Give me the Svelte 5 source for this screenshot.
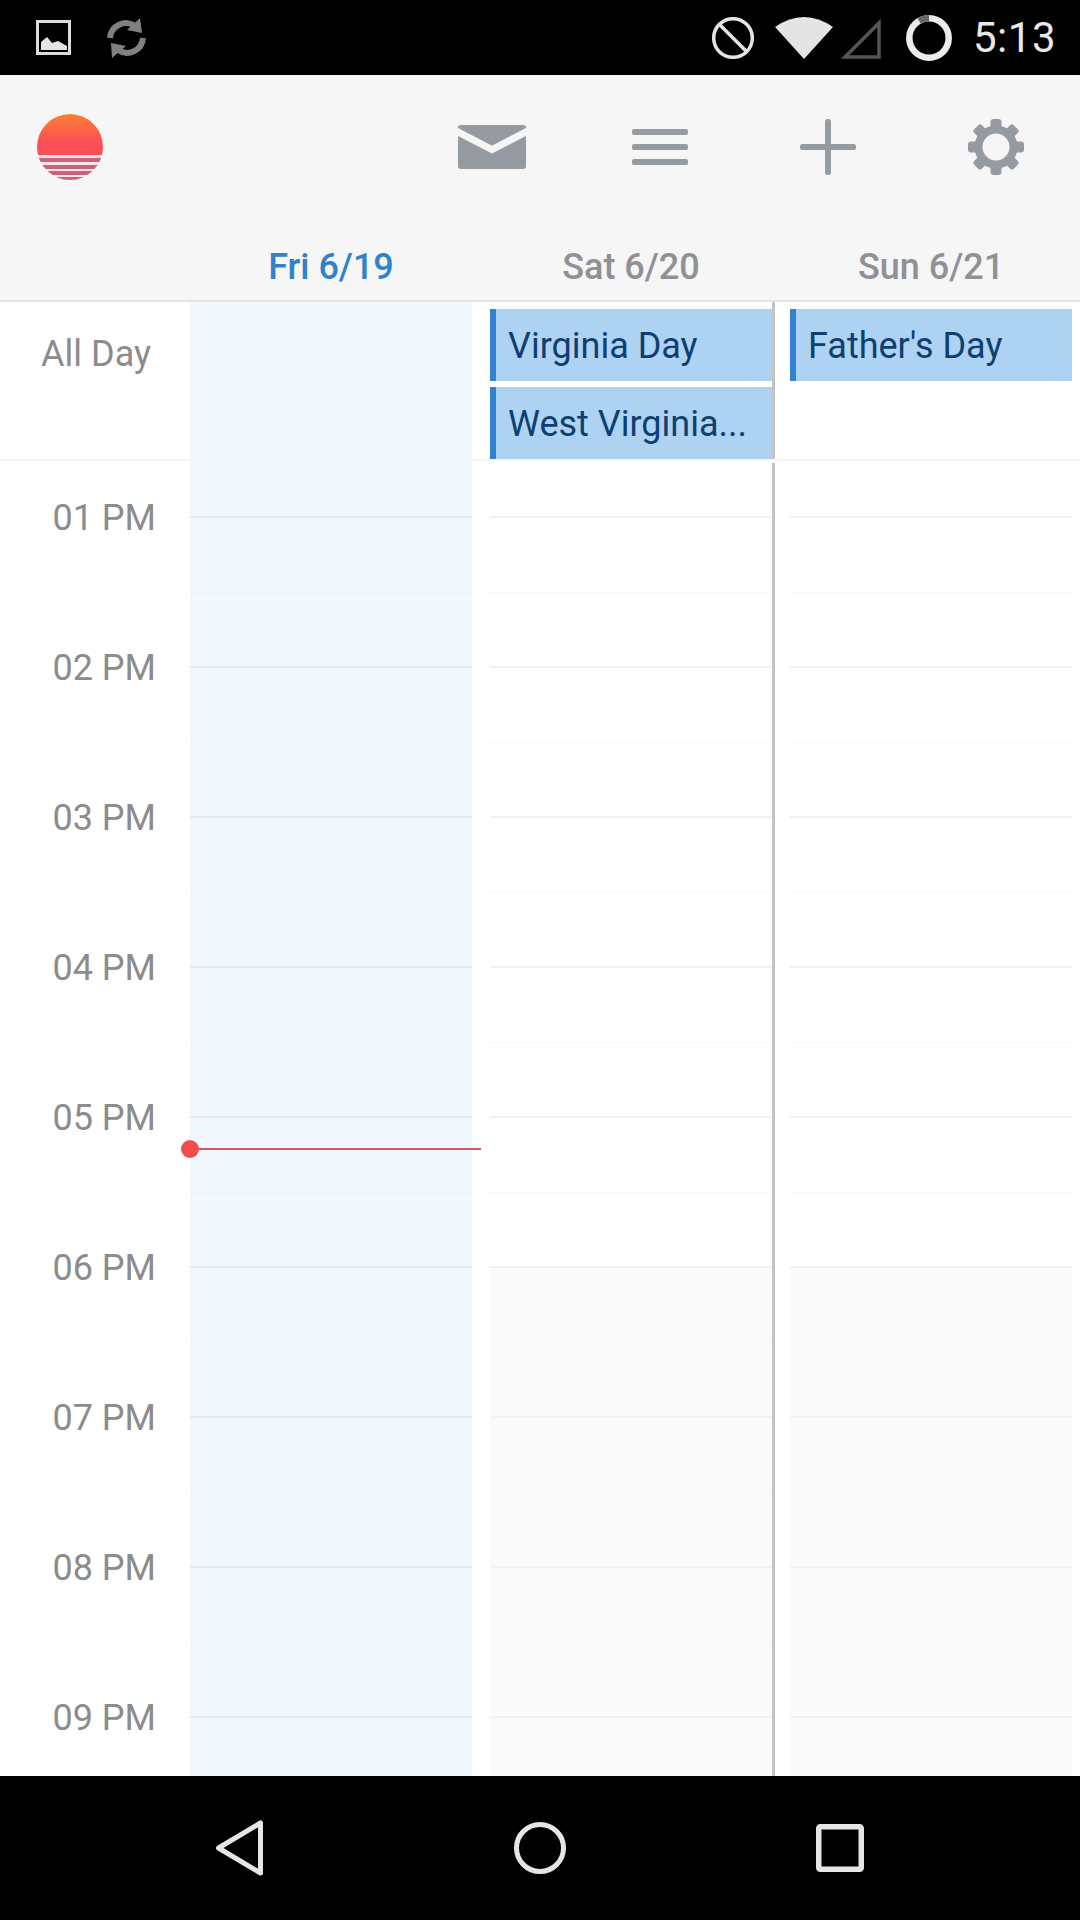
<script>
  const hours = ['01 PM', '02 PM', '03 PM', '04 PM', '05 PM', '06 PM', '07 PM', '08 PM', '09 PM'];

  // half hour rows, index 0 ends on the 01 PM line
  const slots = Array.from({ length: 18 }, (_, i) => ({
    hour: i % 2 === 0,
    off: i > 10
  }));

  const teeth = [0, 45, 90, 135, 180, 225, 270, 315];
  const stripes = [158, 165, 171, 177];
</script>

<div class="phone">
  <div class="statusbar">
    <div class="status-left">
      <svg width="35" height="35" viewBox="36 20 35 35">
        <rect x="37.5" y="21.5" width="32" height="32" fill="none" stroke="#dcdcdc" stroke-width="3" />
        <path d="M41 50V42L47 37L52 43L58 41L67 46V50Z" fill="#e4e4e4" />
      </svg>
      <svg width="40" height="42" viewBox="106 17 40 42">
        <path d="M110 38A16 16 0 0 1 135 26" fill="none" stroke="#808080" stroke-width="6" />
        <polygon points="140,18 142,33 127,30" fill="#808080" />
        <path d="M143 38A16 16 0 0 1 118 50" fill="none" stroke="#808080" stroke-width="6" />
        <polygon points="112,58 111,43 126,46" fill="#808080" />
      </svg>
    </div>
    <div class="status-right">
      <svg width="42" height="42" viewBox="712 16 42 42">
        <circle cx="733" cy="37" r="19.3" fill="none" stroke="#e4e4e4" stroke-width="3.5" />
        <path d="M720 24L746 50" stroke="#e4e4e4" stroke-width="3.5" />
      </svg>
      <svg width="58" height="42" viewBox="775 16 58 42">
        <path d="M804 58L775 26Q804 6 833 26Z" fill="#e4e4e4" />
      </svg>
      <svg width="41" height="42" viewBox="840 16 41 42">
        <path d="M879 22V56H845Z" fill="none" stroke="#555" stroke-width="3.5" />
      </svg>
      <svg class="battery" width="46" height="46" viewBox="906 14 46 46">
        <circle cx="929" cy="37" r="19.7" fill="none" stroke="#ececec" stroke-width="6.5" />
        <path d="M919.2 20A19.7 19.7 0 0 1 929 17.3" fill="none" stroke="#666" stroke-width="6.5" />
      </svg>
      <span class="clock">5:13</span>
    </div>
  </div>

  <header class="toolbar">
    <div class="actions">
      <svg class="logo" width="66" height="66" viewBox="37 114 66 66">
        <defs>
          <linearGradient id="sun" x1="0" y1="0" x2="0" y2="1">
            <stop offset="0" stop-color="#fb8033" />
            <stop offset="0.7" stop-color="#fb4f56" />
          </linearGradient>
          <clipPath id="disc"><circle cx="70" cy="147" r="33" /></clipPath>
        </defs>
        <g clip-path="url(#disc)">
          <rect x="37" y="114" width="66" height="41" fill="url(#sun)" />
          <rect x="37" y="155" width="66" height="25" fill="#fbe5e6" />
          {#each stripes as y}
            <rect x="37" {y} width="66" height="4" fill="#c8637c" />
          {/each}
        </g>
      </svg>
      <div class="buttons">
        <button aria-label="Mail">
          <svg width="68" height="44" viewBox="458 125 68 44">
            <rect x="458" y="125" width="68" height="44" rx="3" fill="#969ba2" />
            <path d="M456 131L492 149.500L528 131" fill="none" stroke="#f6f6f7" stroke-width="7" />
          </svg>
        </button>
        <button aria-label="List">
          <svg width="56" height="36" viewBox="0 0 56 36">
            <rect y="0" width="56" height="6" rx="2" fill="#969ba2" />
            <rect y="15" width="56" height="6" rx="2" fill="#969ba2" />
            <rect y="30" width="56" height="6" rx="2" fill="#969ba2" />
          </svg>
        </button>
        <button aria-label="Add">
          <svg width="56" height="56" viewBox="0 0 56 56">
            <rect y="25" width="56" height="6" rx="2.500" fill="#969ba2" />
            <rect x="25" width="6" height="56" rx="2.500" fill="#969ba2" />
          </svg>
        </button>
        <button aria-label="Settings">
          <svg width="56" height="56" viewBox="-28 -28 56 56">
            <circle r="17.500" fill="none" stroke="#969ba2" stroke-width="8" />
            {#each teeth as a}
              <rect x="-5.500" y="-28" width="11" height="11" rx="3" fill="#969ba2" transform="rotate({a})" />
            {/each}
          </svg>
        </button>
      </div>
    </div>
    <div class="dates">
      <span class="date today">Fri 6/19</span>
      <span class="date sat">Sat 6/20</span>
      <span class="date sun">Sun 6/21</span>
    </div>
  </header>

  <section class="allday">
    <div class="allday-label">All Day</div>
    <div class="allday-fri"></div>
    <div class="allday-day sat-col">
      <div class="event">Virginia Day</div>
      <div class="event">West Virginia...</div>
    </div>
    <div class="allday-split"></div>
    <div class="allday-day sun-col">
      <div class="event">Father's Day</div>
    </div>
  </section>

  <main class="grid">
    <div class="times">
      {#each hours as hour}
        <div class="time">{hour}</div>
      {/each}
    </div>

    <div class="day fri">
      {#each slots as slot}
        <div class="slot" class:hour={slot.hour}></div>
      {/each}
    </div>

    <div class="day sat-col">
      {#each slots as slot}
        <div class="slot" class:hour={slot.hour} class:off={slot.off}></div>
      {/each}
    </div>

    <div class="split"></div>

    <div class="day sun-col">
      {#each slots as slot}
        <div class="slot" class:hour={slot.hour} class:off={slot.off}></div>
      {/each}
    </div>

    <div class="now"><span class="now-dot"></span></div>
  </main>

  <nav class="navbar">
    <svg width="60" height="64" viewBox="0 0 60 64">
      <path d="M50.500 7V57L8.500 32Z" fill="none" stroke="#e6e6e6" stroke-width="5" stroke-linejoin="round" />
    </svg>
    <svg width="52" height="52" viewBox="0 0 52 52">
      <circle cx="26" cy="26" r="23.500" fill="none" stroke="#e6e6e6" stroke-width="5" />
    </svg>
    <svg width="48" height="48" viewBox="0 0 48 48">
      <rect x="2.750" y="2.750" width="42.500" height="42.500" rx="1.500" fill="none" stroke="#e6e6e6" stroke-width="5.500" />
    </svg>
  </nav>
</div>

<style>
  :global(body) {
    margin: 0;
    background: #fff;
  }

  .phone {
    width: 1080px;
    height: 1920px;
    display: flex;
    flex-direction: column;
    font-family: Roboto, "Liberation Sans", sans-serif;
    overflow: hidden;
  }

  svg {
    display: block;
  }

  .statusbar {
    height: 75px;
    flex: none;
    background: #000;
    display: flex;
    justify-content: space-between;
    padding: 0 24px 0 36px;
    box-sizing: border-box;
  }

  .status-left {
    display: flex;
    align-items: center;
    gap: 35px;
  }

  .status-right {
    display: flex;
    align-items: center;
    gap: 7px;
  }

  .status-right svg:first-child {
    margin-right: 14px;
  }

  .battery {
    margin-left: 18px;
    margin-right: 14px;
  }

  .clock {
    color: #e8e8e8;
    font-size: 42px;
    letter-spacing: 0.5px;
    line-height: 75px;
  }

  .toolbar {
    flex: none;
    height: 227px;
    background: #f6f6f7;
    border-bottom: 2px solid #e4e4e4;
    box-sizing: border-box;
  }

  .actions {
    height: 144px;
    display: flex;
    align-items: center;
    justify-content: space-between;
    padding-left: 37px;
  }

  .buttons {
    display: flex;
  }

  .buttons button {
    width: 168px;
    height: 144px;
    padding: 0;
    border: 0;
    background: none;
    display: flex;
    align-items: center;
    justify-content: center;
  }

  .dates {
    display: flex;
    padding: 29px 0 0 190px;
  }

  .date {
    font-size: 36px;
    line-height: 38px;
    font-weight: 500;
    color: #8f9194;
    text-align: center;
    width: 282px;
  }

  .date.today {
    color: #3182c8;
  }

  .date.sat,
  .date.sun {
    margin-left: 18px;
  }

  .allday {
    flex: none;
    height: 159px;
    display: flex;
    box-sizing: border-box;
  }

  .allday-label {
    width: 190px;
    box-sizing: border-box;
    padding: 33px 39px 0 0;
    text-align: right;
    font-size: 36px;
    line-height: 38px;
    color: #8c8c8c;
    border-bottom: 2px solid #f5f5f5;
  }

  .allday-fri {
    width: 282px;
    background: #f2f7fd;
  }

  .allday-day {
    box-sizing: border-box;
    padding-top: 7px;
    display: flex;
    flex-direction: column;
    gap: 6px;
    border-bottom: 2px solid #f5f5f5;
  }

  .allday-split {
    width: 3px;
    background: #c4c4c4;
    height: 157px;
    flex: none;
  }

  .sat-col {
    width: 300px;
    padding-left: 18px;
    box-sizing: border-box;
    flex: none;
  }

  .sun-col {
    width: 305px;
    padding-left: 15px;
    padding-right: 8px;
    box-sizing: border-box;
    flex: none;
  }

  .event {
    height: 72px;
    box-sizing: border-box;
    background: #aed3f2;
    border-left: 6px solid #3182d0;
    padding-left: 12px;
    font-size: 36px;
    line-height: 74px;
    color: #0f3f70;
    white-space: nowrap;
    overflow: hidden;
  }

  .grid {
    flex: 1;
    min-height: 0;
    display: flex;
    position: relative;
    overflow: hidden;
  }

  .times {
    width: 190px;
    flex: none;
    box-sizing: border-box;
    padding: 38px 34px 0 0;
    display: flex;
    flex-direction: column;
    gap: 112px;
    text-align: right;
  }

  .time {
    height: 38px;
    font-size: 36px;
    line-height: 38px;
    color: #8c8c8c;
  }

  .day.fri {
    width: 282px;
    flex: none;
    background: #f2f7fd;
  }

  .slot {
    height: 75px;
    box-sizing: border-box;
    border-bottom: 1px dotted #f4f4f4;
  }

  .slot.hour {
    border-bottom: 2px solid #f1f1f1;
  }

  .slot:first-child {
    height: 57px;
  }

  .slot.off {
    background: #fafafa;
  }

  .fri .slot {
    border-bottom-color: #e9eef4;
  }

  .fri .slot.hour {
    border-bottom-color: #e6ebf1;
  }

  .split {
    width: 3px;
    flex: none;
    background: #c4c4c4;
    margin-top: 2px;
  }

  .now {
    position: absolute;
    left: 190px;
    top: 687px;
    width: 291px;
    height: 2px;
    background: #cf5a5e;
  }

  .now-dot {
    position: absolute;
    left: -9px;
    top: -8px;
    width: 18px;
    height: 18px;
    border-radius: 50%;
    background: #f24e52;
  }

  .navbar {
    flex: none;
    height: 144px;
    background: #000;
    display: grid;
    grid-template-columns: repeat(3, 300px);
    padding: 0 90px;
    align-items: center;
    justify-items: center;
  }
</style>
